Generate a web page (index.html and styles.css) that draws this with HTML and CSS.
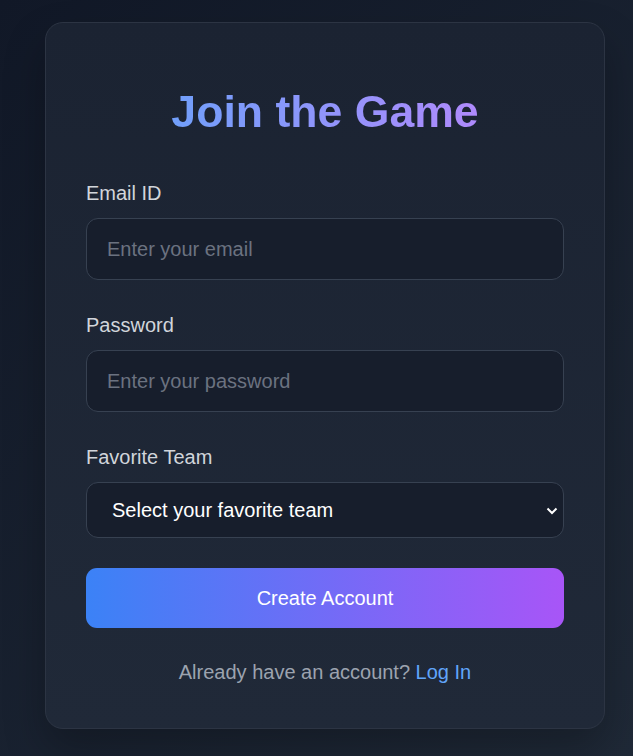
FILE: index.html
```html
<!DOCTYPE html>
<html lang="en">
<head>
    <meta charset="UTF-8">
    <meta name="viewport" content="width=device-width, initial-scale=1.0">
    <title>Join the Game</title>
    <link rel="stylesheet" href="styles.css">
</head>
<body>
    <!-- Signup card -->
    <div class="card">
        <h1 class="title">Join the Game</h1>
        <form class="form" onsubmit="return false;">
            <div class="field">
                <label for="email">Email ID</label>
                <input type="email" id="email" placeholder="Enter your email">
            </div>
            <div class="field">
                <label for="password">Password</label>
                <input type="password" id="password" placeholder="Enter your password">
            </div>
            <div class="field">
                <label for="team">Favorite Team</label>
                <div class="select-wrap">
                    <select id="team">
                        <option value="">Select your favorite team</option>
                        <option>Lakers</option>
                        <option>Warriors</option>
                        <option>Celtics</option>
                    </select>
                    <!-- chevron for the select -->
                    <svg class="chevron" width="12" height="8" viewBox="0 0 12 8">
                        <path d="M1.5 1.5 L6 6 L10.5 1.5" fill="none" stroke="#ffffff" stroke-width="2"/>
                    </svg>
                </div>
            </div>
            <button type="submit" class="btn">Create Account</button>
        </form>
        <p class="footer">Already have an account? <a href="#">Log In</a></p>
    </div>
</body>
</html>
```

FILE: styles.css
```css
* {
    box-sizing: border-box;
}
html, body {
    margin: 0;
    min-height: 100%;
}
body {
    font-family: "Liberation Sans", Arial, sans-serif;
    background: linear-gradient(135deg, #111827 0%, #1f2937 100%);
    min-height: 756px;
    padding: 22px 0 0 45px;
    color: #d1d5db;
    color-scheme: dark;
}
/* Card */
.card {
    width: 560px;
    padding: 40px 40px 42px;
    background: linear-gradient(180deg, #1b2332 0%, #202938 100%);
    border: 1px solid #2c3443;
    border-radius: 18px;
    box-shadow: 0 20px 40px rgba(0, 0, 0, 0.25);
}
.title {
    margin: 22px 0 40px;
    font-size: 44.6px;
    line-height: 54px;
    font-weight: 700;
    text-align: center;
    background: linear-gradient(90deg, #60a5fa, #c084fc);
    -webkit-background-clip: text;
    background-clip: text;
    color: transparent;
}
.form {
    display: flex;
    flex-direction: column;
}
.field {
    display: flex;
    flex-direction: column;
    margin-bottom: 31px;
}
.field label {
    font-size: 20px;
    line-height: 28px;
    margin-bottom: 11px;
    color: #d1d5db;
}
.field input,
.field select {
    width: 100%;
    height: 62px;
    padding: 0 20px;
    font-family: inherit;
    font-size: 20px;
    color: #f3f4f6;
    background-color: #171e2c;
    border: 1px solid #374151;
    border-radius: 12px;
    outline: none;
}
.field input::placeholder {
    color: #6b7280;
}
.select-wrap {
    position: relative;
}
.field select {
    -webkit-appearance: none;
    appearance: none;
    display: block;
    height: 56px;
    padding: 0 30px 0 25px;
    color: #ffffff;
}
.chevron {
    position: absolute;
    right: 6px;
    top: 25px;
    pointer-events: none;
}
.form .field:nth-child(3) {
    margin-bottom: 30px;
}
/* Submit button */
.btn {
    height: 60px;
    font-family: inherit;
    font-size: 20px;
    color: #ffffff;
    border: none;
    border-radius: 11px;
    background: linear-gradient(90deg, #3b82f6, #a855f7);
    cursor: pointer;
}
.footer {
    margin: 30px 0 0;
    font-size: 20px;
    line-height: 28px;
    text-align: center;
    color: #9ca3af;
}
.footer a {
    color: #60a5fa;
    text-decoration: none;
}
```
